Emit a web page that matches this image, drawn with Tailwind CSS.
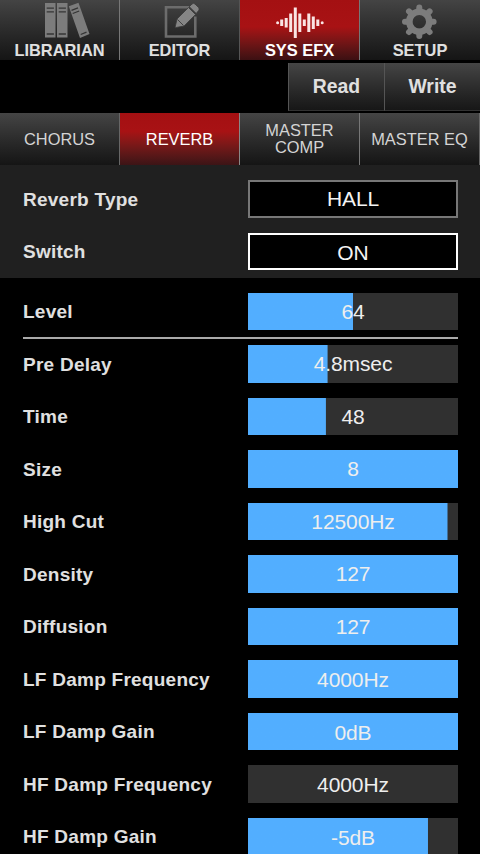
<!DOCTYPE html>
<html lang="en">
<head>
<meta charset="utf-8">
<title>Reverb</title>
<script src="https://cdn.jsdelivr.net/npm/@tailwindcss/browser@4"></script>
</head>
<body class="h-[854px] w-[480px] overflow-hidden bg-black font-['Liberation_Sans',Arial,sans-serif] text-[#e0e0e0]">
<nav class="grid h-[60px] grid-cols-4 text-[16.4px] leading-5 font-bold">
  <div class="flex flex-col items-center border-r border-[#777] bg-linear-to-b from-[#444] to-[#151515]">
    <svg class="h-10 w-12 overflow-visible" viewBox="0 0 48 40"><path fill="#7c7c7c" d="M9 3h10.500v34.500H9zM21 3h10.500v34.500H21zM32.800 6.300 42.500 2.700 53.500 34 44 38z"/><path d="M10.700 8.200h7.200M10.700 11.800h7.200M10.700 34h7.200M22.700 8.200h7.200M22.700 11.800h7.200M22.700 34h7.200M35.500 10.300l6.500-2.500M36.700 13.500l6.500-2.500M44.700 34.500l5.800-2.400" fill="none" stroke="#343434" stroke-width="1.300"/></svg>
    <span>LIBRARIAN</span>
  </div>
  <div class="flex flex-col items-center border-r border-[#555] bg-linear-to-b from-[#444] to-[#151515]">
    <svg class="h-10 w-12 overflow-visible" viewBox="0 0 48 40"><path d="M33 7.200H10v29.300h29.300V16.500" fill="none" stroke="#6c6c6c" stroke-width="2.600"/><path fill="#858585" stroke="#383838" stroke-width=".8" d="m19 27.700 2-8.700L32.500 7.500l7 7L28 26zM33.300 6.700 36 4q1.500-1.300 3 0l3.600 3.600q1.300 1.500 0 3L40.200 13.500z"/><path d="m21.500 19.500 6 6" stroke="#383838" stroke-width=".9"/></svg>
    <span>EDITOR</span>
  </div>
  <div class="flex flex-col items-center border-r border-[#777] bg-linear-to-b from-[#a41012] via-[#a81214] via-45% to-[#3c1012] text-white">
    <svg class="h-10 w-12" viewBox="0 0 48 40"><g fill="none" stroke="#fae4e4" stroke-width="3"><path d="M5.700 19.500v6.600M10.200 18v9.600M14.700 13.500v18.600M19.300 7.500v30.600M23.800 13.500v18.600M28.300 19.500v6.600M32.800 13.500v18.600M37.300 16.500v12.600M41.800 19.500v6.600"/><path d="M1.600 22.800h.01M46.200 22.800h.01" stroke-linecap="round"/></g></svg>
    <span>SYS EFX</span>
  </div>
  <div class="flex flex-col items-center bg-linear-to-b from-[#444] to-[#151515]">
    <svg class="h-10 w-12" viewBox="0 0 48 40"><g transform="translate(23.300 21.700)"><g stroke="#7c7c7c" stroke-width="6" stroke-linecap="round"><path d="M0-14.300V-10M0 14.300V10M-14.300 0H-10M14.300 0H10M-10.300-10.300l3 3M10.300 10.300l-3-3M10.300-10.300l-3 3M-10.300 10.300l3-3"/></g><circle r="10" fill="none" stroke="#7c7c7c" stroke-width="6.500"/></g></svg>
    <span>SETUP</span>
  </div>
</nav>
<div class="mt-[3px] flex h-[47.500px] justify-end text-[19.4px] font-bold">
  <button class="w-24 border-b border-l border-b-[#333] border-l-[#555] bg-linear-to-b from-[#454545] to-[#171717]">Read</button>
  <button class="w-24 border-b border-l border-b-[#333] border-l-[#555] bg-linear-to-b from-[#454545] to-[#171717]">Write</button>
</div>
<div class="mt-[2.500px] grid h-[52px] grid-cols-4 text-center text-[16.4px] leading-[17px] text-[#d4d4d4]">
  <div class="flex items-center justify-center border-r border-[#666] bg-linear-to-b from-[#454545] to-[#151515]">CHORUS</div>
  <div class="flex items-center justify-center border-r border-[#888] bg-linear-to-b from-[#a41012] via-[#a81214] via-35% to-[#3c1416] text-white">REVERB</div>
  <div class="flex items-center justify-center border-r border-[#777] bg-linear-to-b from-[#454545] to-[#151515] pb-px">MASTER<br>COMP</div>
  <div class="flex items-center justify-center border-r border-[#666] bg-linear-to-b from-[#454545] to-[#151515] whitespace-nowrap">MASTER EQ</div>
</div>
<section class="flex h-[112.500px] flex-col gap-[15px] bg-[#202020] pt-[15px] pr-[22px] pl-[23px] text-[19px] font-bold tracking-[.25px]">
  <div class="flex h-[37.500px] items-center justify-between"><span class="pt-0.5">Reverb Type</span><div class="flex h-full w-[210px] items-center justify-center border-2 border-[#777] bg-black text-[21px] font-normal tracking-[-.1px] text-[#f4f4f4]">HALL</div></div>
  <div class="flex h-[37.500px] items-center justify-between"><span class="pt-0.5">Switch</span><div class="flex h-full w-[210px] items-center justify-center border-2 border-white bg-black pt-0.5 text-[21px] font-normal tracking-[-.1px] text-[#f4f4f4]">ON</div></div>
</section>
<main class="pt-[15px] pr-[22px] pl-[23px] text-[19px] font-bold tracking-[.25px]">
  <div class="flex h-[46px] items-start justify-between border-b-2 border-[#aaa]"><span class="leading-[37.500px]">Level</span><div class="h-[37.500px] w-[210px] bg-[#303030] bg-linear-to-r from-[#52aeff] to-[#52aeff] bg-no-repeat text-center text-[21px] leading-[37.500px] font-normal tracking-[-.1px] text-[#eee]" style="background-size:50% 100%">64</div></div>
  <div class="mt-[6.500px] flex flex-col gap-[15px]">
    <div class="flex h-[37.500px] items-center justify-between"><span class="pt-0.5">Pre Delay</span><div class="h-full w-[210px] bg-[#303030] bg-linear-to-r from-[#52aeff] to-[#52aeff] bg-no-repeat text-center text-[21px] leading-[37.500px] font-normal tracking-[-.1px] text-[#eee]" style="background-size:37.9% 100%">4.8msec</div></div>
    <div class="flex h-[37.500px] items-center justify-between"><span class="pt-0.5">Time</span><div class="h-full w-[210px] bg-[#303030] bg-linear-to-r from-[#52aeff] to-[#52aeff] bg-no-repeat text-center text-[21px] leading-[37.500px] font-normal tracking-[-.1px] text-[#eee]" style="background-size:37.1% 100%">48</div></div>
    <div class="flex h-[37.500px] items-center justify-between"><span class="pt-0.5">Size</span><div class="h-full w-[210px] bg-[#303030] bg-linear-to-r from-[#52aeff] to-[#52aeff] bg-no-repeat text-center text-[21px] leading-[37.500px] font-normal tracking-[-.1px] text-[#eee]" style="background-size:100% 100%">8</div></div>
    <div class="flex h-[37.500px] items-center justify-between"><span class="pt-0.5">High Cut</span><div class="h-full w-[210px] bg-[#303030] bg-linear-to-r from-[#52aeff] to-[#52aeff] bg-no-repeat text-center text-[21px] leading-[37.500px] font-normal tracking-[-.1px] text-[#eee]" style="background-size:95% 100%">12500Hz</div></div>
    <div class="flex h-[37.500px] items-center justify-between"><span class="pt-0.5">Density</span><div class="h-full w-[210px] bg-[#303030] bg-linear-to-r from-[#52aeff] to-[#52aeff] bg-no-repeat text-center text-[21px] leading-[37.500px] font-normal tracking-[-.1px] text-[#eee]" style="background-size:100% 100%">127</div></div>
    <div class="flex h-[37.500px] items-center justify-between"><span class="pt-0.5">Diffusion</span><div class="h-full w-[210px] bg-[#303030] bg-linear-to-r from-[#52aeff] to-[#52aeff] bg-no-repeat text-center text-[21px] leading-[37.500px] font-normal tracking-[-.1px] text-[#eee]" style="background-size:100% 100%">127</div></div>
    <div class="flex h-[37.500px] items-center justify-between"><span class="pt-0.5">LF Damp Frequency</span><div class="h-full w-[210px] bg-[#303030] bg-linear-to-r from-[#52aeff] to-[#52aeff] bg-no-repeat pt-px text-center text-[21px] leading-[37.500px] font-normal tracking-[-.1px] text-[#eee]" style="background-size:100% 100%">4000Hz</div></div>
    <div class="flex h-[37.500px] items-center justify-between"><span class="pt-0.5">LF Damp Gain</span><div class="h-full w-[210px] bg-[#303030] bg-linear-to-r from-[#52aeff] to-[#52aeff] bg-no-repeat pt-px text-center text-[21px] leading-[37.500px] font-normal tracking-[-.1px] text-[#eee]" style="background-size:100% 100%">0dB</div></div>
    <div class="flex h-[37.500px] items-center justify-between"><span class="pt-0.5">HF Damp Frequency</span><div class="h-full w-[210px] bg-[#303030] bg-linear-to-r from-[#52aeff] to-[#52aeff] bg-no-repeat pt-px text-center text-[21px] leading-[37.500px] font-normal tracking-[-.1px] text-[#eee]" style="background-size:0% 100%">4000Hz</div></div>
    <div class="flex h-[37.500px] items-center justify-between"><span class="pt-0.5">HF Damp Gain</span><div class="h-full w-[210px] bg-[#303030] bg-linear-to-r from-[#52aeff] to-[#52aeff] bg-no-repeat pt-px text-center text-[21px] leading-[37.500px] font-normal tracking-[-.1px] text-[#eee]" style="background-size:85.7% 100%">-5dB</div></div>
  </div>
</main>
</body>
</html>
